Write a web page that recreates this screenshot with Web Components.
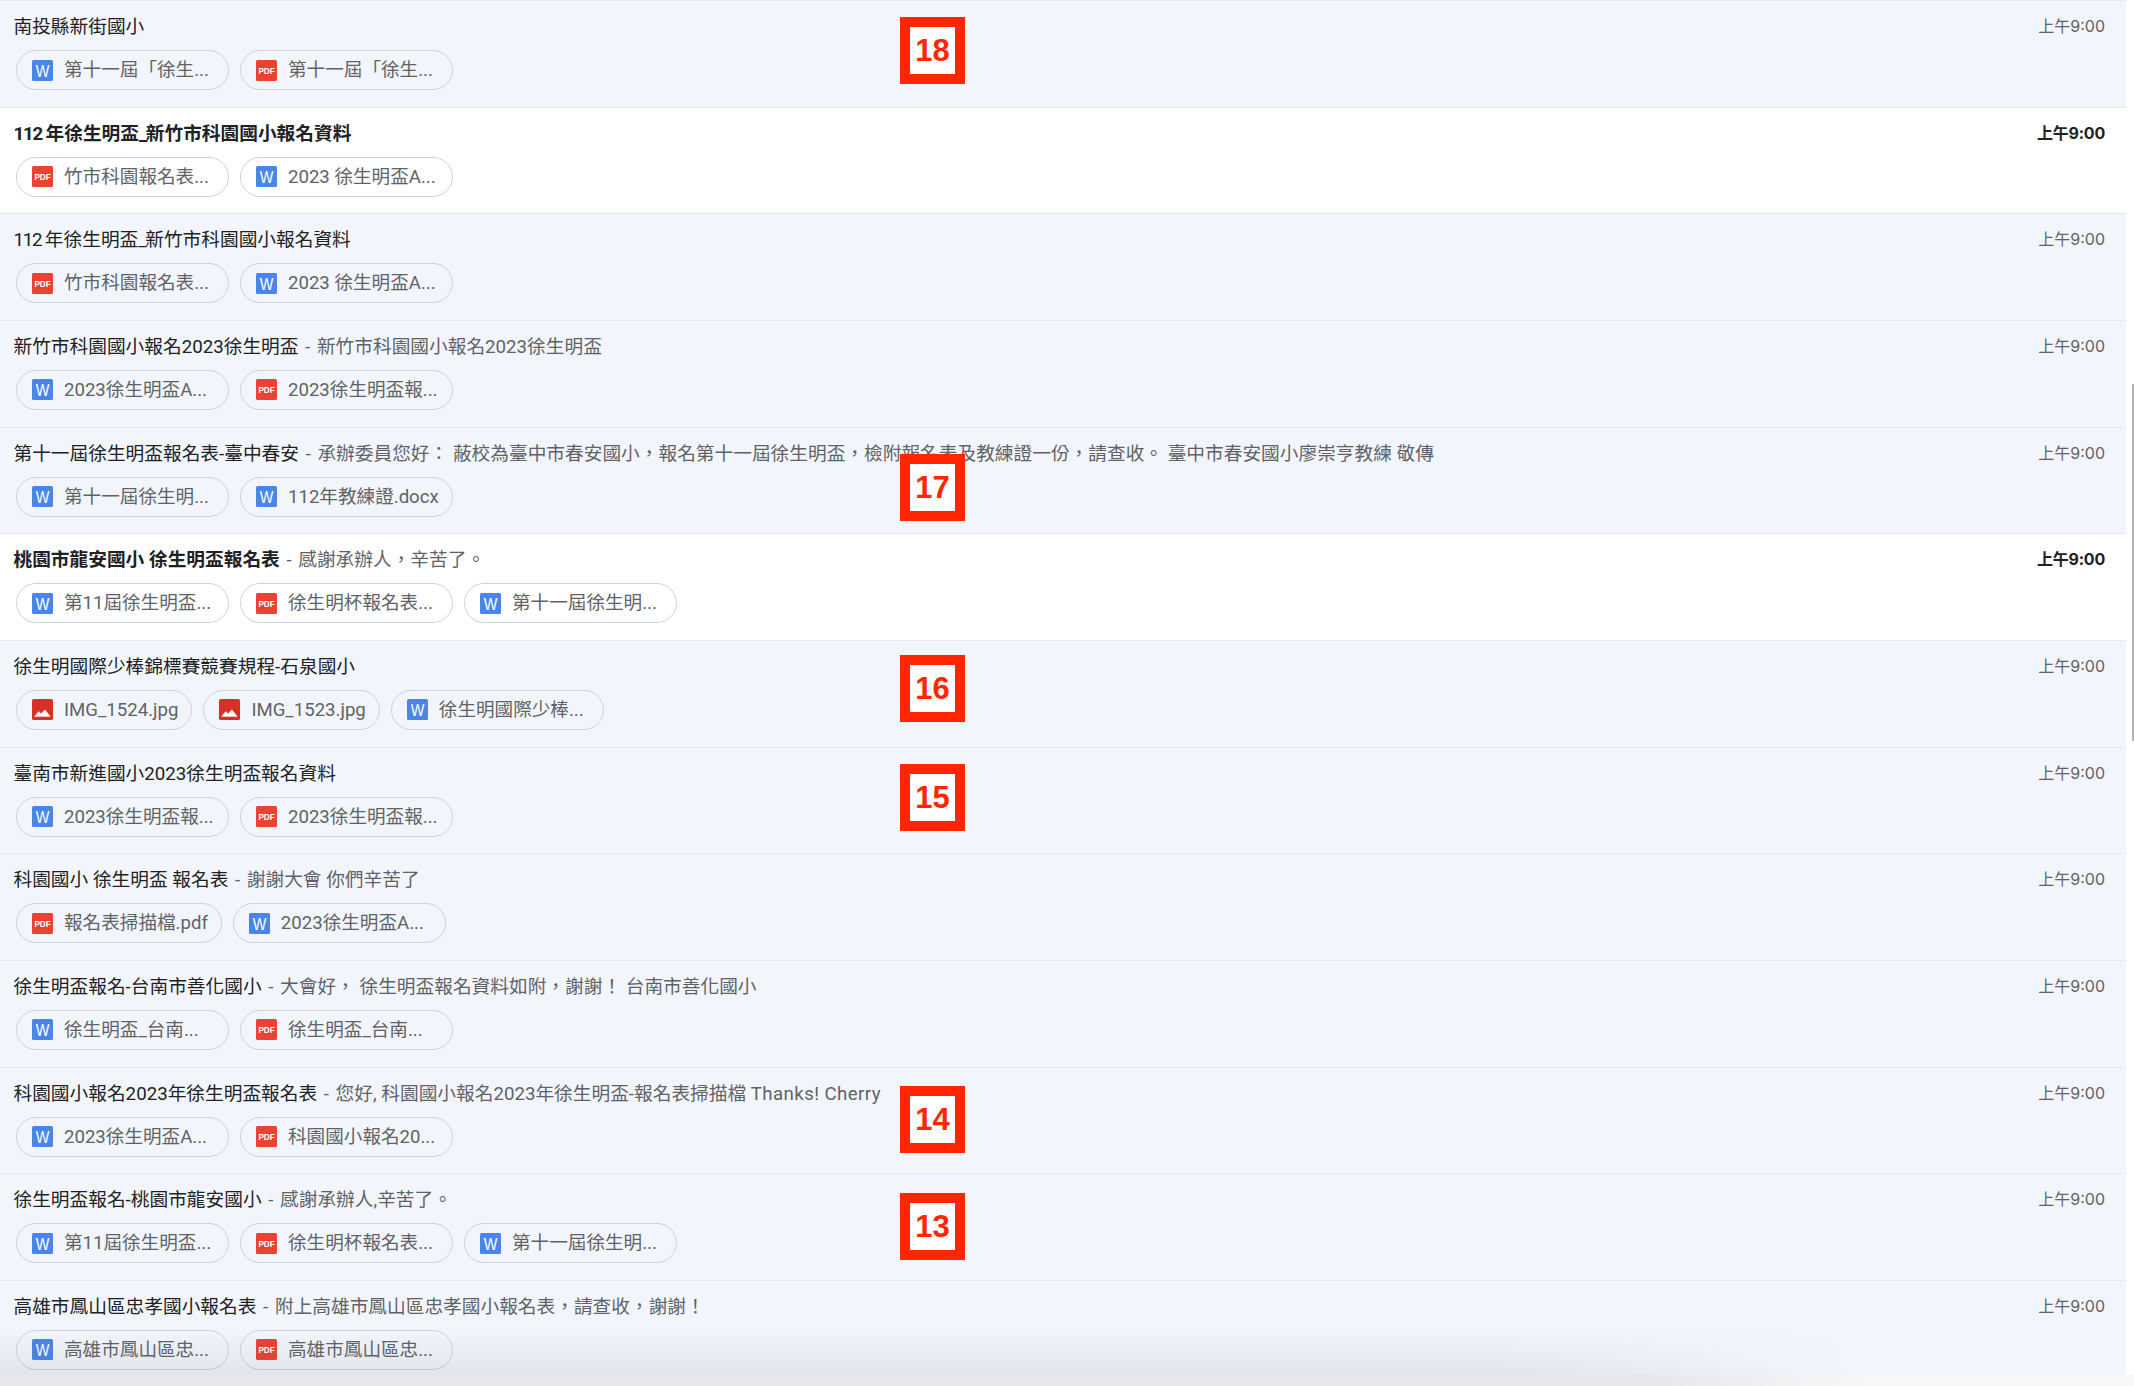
<!DOCTYPE html>
<html lang="zh-Hant"><head><meta charset="utf-8"><title>Inbox</title>
<style>
html,body{margin:0;height:1386px;overflow:hidden;background:#fff}
body{font-family:Roboto,"Noto Sans CJK TC",sans-serif}
.tn{letter-spacing:-1.2px}
.us{letter-spacing:-1.5px}
.wd{letter-spacing:.4px}
</style></head><body>
<mail-page>
<mail-row time="上午9:00"><span slot="subject">南投縣新街國小</span><file-chip fixed kind="w">第十一屆「徐生...</file-chip><file-chip fixed kind="pdf">第十一屆「徐生...</file-chip></mail-row>
<mail-row unread time="上午9:00"><span slot="subject"><span class="tn">112 </span>年徐生明盃<span class="us">_</span>新竹市科園國小報名資料</span><file-chip fixed kind="pdf">竹市科園報名表...</file-chip><file-chip fixed kind="w">2023 徐生明盃A...</file-chip></mail-row>
<mail-row time="上午9:00"><span slot="subject"><span class="tn">112 </span>年徐生明盃<span class="us">_</span>新竹市科園國小報名資料</span><file-chip fixed kind="pdf">竹市科園報名表...</file-chip><file-chip fixed kind="w">2023 徐生明盃A...</file-chip></mail-row>
<mail-row time="上午9:00"><span slot="subject">新竹市科園國小報名2023徐生明盃</span><span slot="snippet">新竹市科園國小報名2023徐生明盃</span><file-chip fixed kind="w">2023徐生明盃A...</file-chip><file-chip fixed kind="pdf">2023徐生明盃報...</file-chip></mail-row>
<mail-row time="上午9:00"><span slot="subject">第十一屆徐生明盃報名表-臺中春安</span><span slot="snippet">承辦委員您好： 蔽校為臺中市春安國小，報名第十一屆徐生明盃，檢附報名表及教練證一份，請查收。 臺中市春安國小廖崇亨教練 敬傳</span><file-chip fixed kind="w">第十一屆徐生明...</file-chip><file-chip kind="w">112年教練證.docx</file-chip></mail-row>
<mail-row unread time="上午9:00"><span slot="subject">桃園市龍安國小 徐生明盃報名表</span><span slot="snippet">感謝承辦人，辛苦了。</span><file-chip fixed kind="w">第11屆徐生明盃...</file-chip><file-chip fixed kind="pdf">徐生明杯報名表...</file-chip><file-chip fixed kind="w">第十一屆徐生明...</file-chip></mail-row>
<mail-row time="上午9:00"><span slot="subject">徐生明國際少棒錦標賽競賽規程-石泉國小</span><file-chip kind="img">IMG_1524.jpg</file-chip><file-chip kind="img">IMG_1523.jpg</file-chip><file-chip fixed kind="w">徐生明國際少棒...</file-chip></mail-row>
<mail-row time="上午9:00"><span slot="subject">臺南市新進國小2023徐生明盃報名資料</span><file-chip fixed kind="w">2023徐生明盃報...</file-chip><file-chip fixed kind="pdf">2023徐生明盃報...</file-chip></mail-row>
<mail-row time="上午9:00"><span slot="subject">科園國小 徐生明盃 報名表</span><span slot="snippet">謝謝大會 你們辛苦了</span><file-chip kind="pdf">報名表掃描檔.pdf</file-chip><file-chip fixed kind="w">2023徐生明盃A...</file-chip></mail-row>
<mail-row time="上午9:00"><span slot="subject">徐生明盃報名-台南市善化國小</span><span slot="snippet">大會好， 徐生明盃報名資料如附，謝謝！ 台南市善化國小</span><file-chip fixed kind="w">徐生明盃_台南...</file-chip><file-chip fixed kind="pdf">徐生明盃_台南...</file-chip></mail-row>
<mail-row time="上午9:00"><span slot="subject">科園國小報名2023年徐生明盃報名表</span><span slot="snippet">您好, 科園國小報名2023年徐生明盃-報名表掃描檔 <span class="wd">Thanks! Cherry</span></span><file-chip fixed kind="w">2023徐生明盃A...</file-chip><file-chip fixed kind="pdf">科園國小報名20...</file-chip></mail-row>
<mail-row time="上午9:00"><span slot="subject">徐生明盃報名-桃園市龍安國小</span><span slot="snippet">感謝承辦人,辛苦了。</span><file-chip fixed kind="w">第11屆徐生明盃...</file-chip><file-chip fixed kind="pdf">徐生明杯報名表...</file-chip><file-chip fixed kind="w">第十一屆徐生明...</file-chip></mail-row>
<mail-row time="上午9:00"><span slot="subject">高雄市鳳山區忠孝國小報名表</span><span slot="snippet">附上高雄市鳳山區忠孝國小報名表，請查收，謝謝！</span><file-chip fixed kind="w">高雄市鳳山區忠...</file-chip><file-chip fixed kind="pdf">高雄市鳳山區忠...</file-chip></mail-row>
<step-badge slot="overlay" style="top:17px">18</step-badge>
<step-badge slot="overlay" style="top:454px">17</step-badge>
<step-badge slot="overlay" style="top:655px">16</step-badge>
<step-badge slot="overlay" style="top:764px">15</step-badge>
<step-badge slot="overlay" style="top:1086px">14</step-badge>
<step-badge slot="overlay" style="top:1193px">13</step-badge>
</mail-page>
<script>
const ICONS={
w:`<svg width="21" height="21" viewBox="0 0 21 21"><rect width="21" height="21" rx="1.5" fill="#4a86e8"/><text transform="translate(3.8 16.7) scale(.9 1)" font-family="Liberation Sans,sans-serif" font-size="16" fill="#fff">W</text></svg>`,
pdf:`<svg width="21" height="21" viewBox="0 0 21 21"><rect width="21" height="21" rx="1.5" fill="#ea4335"/><text transform="translate(2.4 14) scale(1 1.2)" font-family="Liberation Sans,sans-serif" font-weight="700" font-size="8.2" fill="#fff">PDF</text></svg>`,
img:`<svg width="21" height="21" viewBox="0 0 21 21"><rect width="21" height="21" rx="1.5" fill="#d93025"/><path d="M2.5 17.5L6.7 12.5l2.3 2.3L13 10.8l5.3 6.7z" fill="#fff" stroke="#fff" stroke-width=".4" stroke-linejoin="round"/></svg>`
};
class MailPage extends HTMLElement{constructor(){super();this.attachShadow({mode:'open'}).innerHTML=`<style>
:host{display:flex;flex-direction:column;position:relative;height:1386px;overflow:hidden;background:#fff}
.list{display:flex;flex-direction:column;width:2126px}
.thumb{position:absolute;top:384px;height:357px;left:2132px;width:2px;background:#b4b4b4}
.strip{position:absolute;left:0;right:0;bottom:0;height:11px;background:linear-gradient(to right,#e6e7ea 1650px,#f7f8fa 1880px)}
.shade{position:absolute;left:0;right:0;bottom:11px;height:45px;pointer-events:none;
background:linear-gradient(to bottom,rgba(90,90,100,0),rgba(90,90,100,.11));
-webkit-mask-image:linear-gradient(to right,#000 1500px,transparent 1850px);mask-image:linear-gradient(to right,#000 1500px,transparent 1850px)}
</style><div class="list"><slot></slot></div><div class="thumb"></div><div class="shade"></div><div class="strip"></div><slot name="overlay"></slot>`}}
class MailRow extends HTMLElement{constructor(){super();this.attachShadow({mode:'open'}).innerHTML=`<style>
:host{display:flex;flex:none;box-sizing:border-box;height:106.67px;padding:14px 21px 0 13.5px;background:#f2f6fc;border-top:1px solid #e3e8ef;color:#202124;font-size:18.7px;line-height:24px}
:host([unread]){background:#fff;font-weight:700}
.main{flex:1;min-width:0}
.line{white-space:nowrap;height:24px}
.snip{color:#5f6368;font-weight:400;margin-left:2px}
.sep{margin-right:2px}
.snip.empty{display:none}
.chips{display:flex;gap:11px;margin:11px 0 0 2.5px}
.time{flex:none;font:400 16px/24px Inter,"Noto Sans CJK TC",sans-serif;color:#5f6368;margin:-1px 0 0 12px}
:host([unread]) .time{color:#202124;font-weight:700;letter-spacing:-.2px}
</style><div class="main"><div class="line"><slot name="subject"></slot><span class="snip"> <span class="sep">-</span> <slot name="snippet"></slot></span></div><div class="chips"><slot></slot></div></div><div class="time"></div>`;
this.shadowRoot.querySelector('.time').textContent=this.getAttribute('time')||'';}
connectedCallback(){if(!this.querySelector('[slot=snippet]'))this.shadowRoot.querySelector('.snip').classList.add('empty');}}
class FileChip extends HTMLElement{constructor(){super();this.attachShadow({mode:'open'}).innerHTML=`<style>
:host{display:inline-flex;align-items:center;box-sizing:border-box;height:40px;padding:0 13px 0 15px;gap:11px;border:1.5px solid #ccd3dc;border-radius:20px;color:#5f6368;font-size:18.6px;line-height:24px;font-weight:400;white-space:nowrap}
:host([fixed]){width:213px}
svg{display:block;flex:none}
</style><span class="ic"></span><slot></slot>`}
connectedCallback(){this.shadowRoot.querySelector('.ic').innerHTML=ICONS[this.getAttribute('kind')]||'';}}
class StepBadge extends HTMLElement{constructor(){super();this.attachShadow({mode:'open'}).innerHTML=`<style>
:host{position:absolute;left:900px;width:65px;height:67px;box-sizing:border-box;border:10px solid #ff2600;background:#fff;color:#ff2600;display:flex;align-items:center;justify-content:center;font:700 31px "Liberation Sans",Arial,sans-serif}
</style><slot></slot>`}}
customElements.define('mail-page',MailPage);
customElements.define('mail-row',MailRow);
customElements.define('file-chip',FileChip);
customElements.define('step-badge',StepBadge);
</script>
</body></html>
